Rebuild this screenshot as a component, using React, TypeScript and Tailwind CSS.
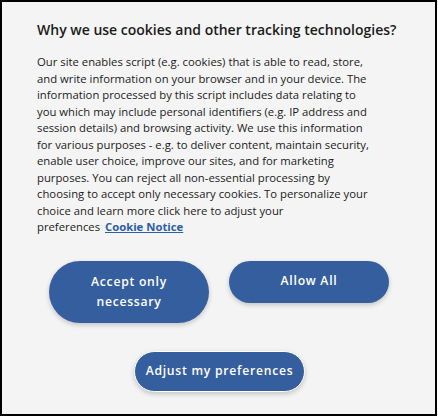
export default function App() {
  return (
    <div className="h-[416px] w-[438px] bg-white font-['Open_Sans',sans-serif]">
      <div className="flex h-[416px] w-[437px] flex-col border-2 border-black bg-[#f4f4f4] pl-[35px] pr-[20px] pt-[18px] text-[#1b1b1b]">
        <h2 className="text-[14px] font-semibold leading-[20px]">
          Why we use cookies and other tracking technologies?
        </h2>
        <p className="mt-[14px] w-[336px] text-[11.3px] leading-[16.5px]">
          Our site enables script (e.g. cookies) that is able to read, store, and write information on your
          browser and in your device. The information processed by this script includes data relating to you
          which may include personal identifiers (e.g. IP address and session details) and browsing activity. We
          use this information for various purposes - e.g. to deliver content, maintain security, enable user
          choice, improve our sites, and for marketing purposes. You can reject all non-essential processing by
          choosing to accept only necessary cookies. To personalize your choice and learn more click here to
          adjust your{" "}
          <span className="whitespace-nowrap">
            preferences{" "}
            <a href="#" className="ml-[2px] font-bold text-[#2f5ea6] underline">
              Cookie Notice
            </a>
          </span>
        </p>
        <div className="mt-[25px] flex items-start gap-[20px] pl-[12px]">
          <button className="h-[62px] w-[160px] rounded-full bg-[#355e9e] px-6 text-[12.2px] font-semibold leading-[20px] tracking-[0.06em] text-white shadow-[0_2px_5px_rgba(0,0,0,0.2)]">
            Accept only necessary
          </button>
          <button className="h-[42px] w-[160px] rounded-full bg-[#355e9e] text-[12.2px] font-semibold tracking-[0.06em] text-white shadow-[0_2px_5px_rgba(0,0,0,0.2)]">
            Allow All
          </button>
        </div>
        <div className="mt-[28px] flex pl-[97px]">
          <button className="h-[41px] w-[171px] rounded-full border border-white bg-[#355e9e] text-[12.2px] font-semibold tracking-[0.06em] text-white shadow-[0_2px_5px_rgba(0,0,0,0.2)]">
            Adjust my preferences
          </button>
        </div>
      </div>
    </div>
  );
}
